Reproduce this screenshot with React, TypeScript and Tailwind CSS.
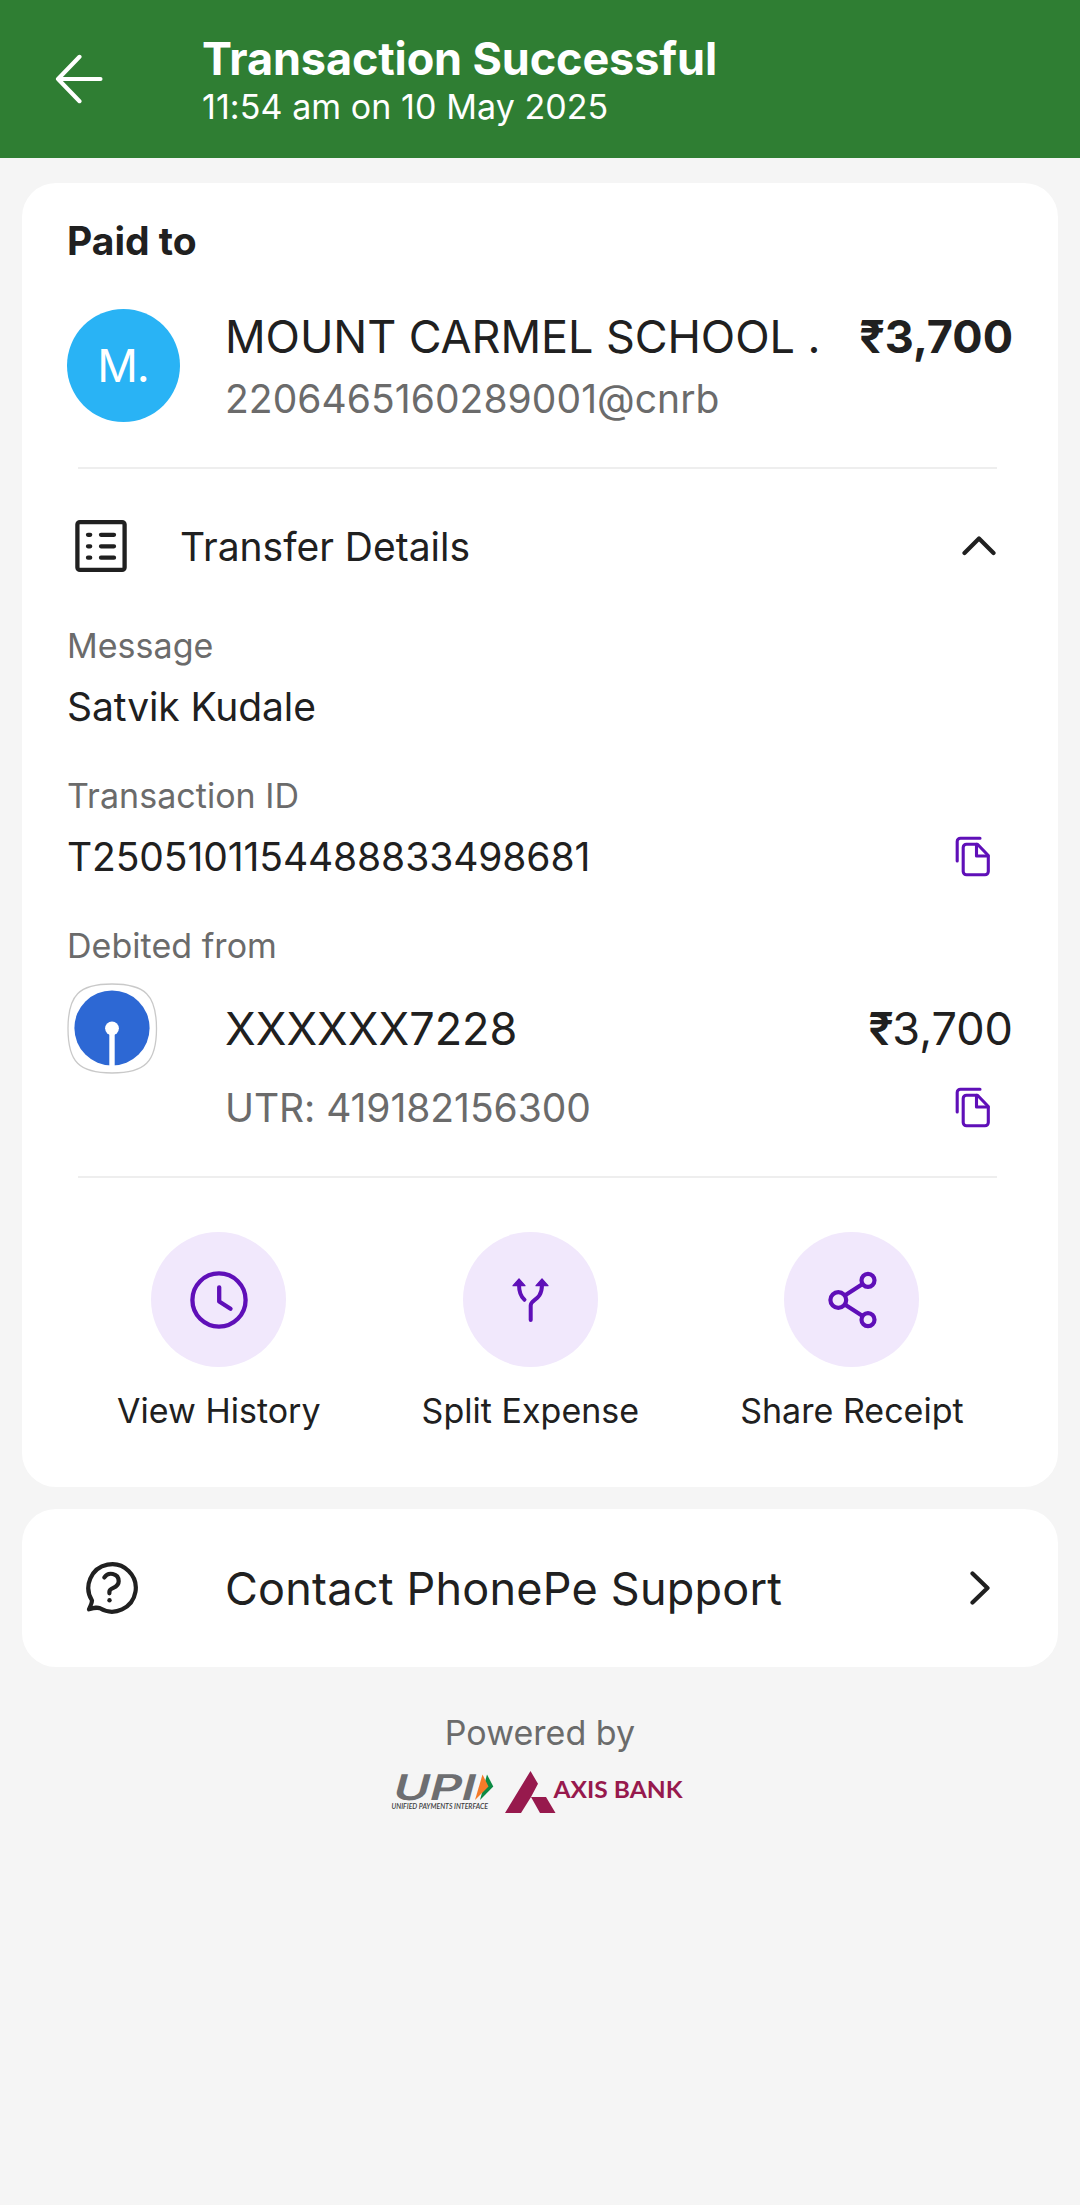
import type { ReactNode } from "react";

function BackIcon() {
  return (
    <svg width="48" height="50" viewBox="0 0 48 50" fill="none" stroke="#fff" strokeWidth="4.1" strokeLinecap="round" strokeLinejoin="round">
      <path d="M24.500 2.800 3 25l21.500 22.200M3 25H45.500" />
    </svg>
  );
}

function ListIcon() {
  return (
    <svg width="54" height="54" viewBox="0 0 54 54" fill="none" stroke="#202020" strokeWidth="4.300" className="mb-0.5">
      <rect x="3.400" y="3.100" width="47.200" height="47.800" rx="2.500" />
      <path strokeLinecap="round" d="M14 15.800h2.200M14 27.300h2.200M14 38.700h2.200M27 15.800h13M27 27.300h13M27 38.700h13" />
    </svg>
  );
}

function ChevronUp() {
  return (
    <svg width="34" height="22" viewBox="0 0 34 22" fill="none" stroke="#202020" strokeWidth="4.200" strokeLinecap="round" strokeLinejoin="round" className="mb-0.5">
      <path d="M2.500 18 17 3.500l14.500 14.500" />
    </svg>
  );
}

function ChevronRight() {
  return (
    <svg width="22" height="34" viewBox="0 0 22 34" fill="none" stroke="#202020" strokeWidth="4.200" strokeLinecap="round" strokeLinejoin="round">
      <path d="M3.500 2.500 18.500 17l-15 14.500" />
    </svg>
  );
}

function CopyIcon() {
  return (
    <svg width="36" height="42" viewBox="0 0 36 42" fill="none" stroke="#5f0fb8" strokeWidth="3.100" strokeLinecap="round" strokeLinejoin="round">
      <path d="M2.200 25V5.500a3.300 3.300 0 0 1 3.300-3.300H25" />
      <path d="M11.500 8.200H22.500L33.300 19.500V35.500a3.300 3.300 0 0 1-3.300 3.300H11.500a3.300 3.300 0 0 1-3.300-3.300V11.500a3.300 3.300 0 0 1 3.300-3.300Z" />
      <path d="M21.500 8.200V20H33" />
    </svg>
  );
}

function ClockIcon() {
  return (
    <svg width="60" height="60" viewBox="0 0 60 60" fill="none" stroke="#5f0fb8" strokeWidth="4.300" strokeLinecap="round" strokeLinejoin="round">
      <circle cx="30" cy="30" r="26.600" />
      <path d="M30.200 17.300V31.500L41.500 38.800" />
    </svg>
  );
}

function SplitIcon() {
  return (
    <svg width="60" height="60" viewBox="0 0 60 60" fill="none" stroke="#5f0fb8" strokeWidth="4" strokeLinecap="round" strokeLinejoin="round">
      <path d="M30.700 50V35.500c0-6.500 11.300-4.500 11.300-21M24.500 29.800c-3-2.600-5.500-6.500-5.500-15.300" />
      <path d="M19 8.800l6 6.900h-12ZM42 8.800l6 6.900H36Z" fill="#5f0fb8" strokeWidth="1.200" />
    </svg>
  );
}

function ShareIcon() {
  return (
    <svg width="60" height="60" viewBox="0 0 60 60" fill="none" stroke="#5f0fb8" strokeWidth="4.200">
      <circle cx="16.300" cy="30" r="7.900" />
      <circle cx="46" cy="10.300" r="6.500" />
      <circle cx="46" cy="49.700" r="6.500" />
      <path d="M22.800 25.600 40.600 13.900M22.800 34.400l17.800 11.700" />
    </svg>
  );
}

function SupportIcon() {
  return (
    <svg width="54" height="54" viewBox="0 0 54 54" fill="none" stroke="#202020" strokeWidth="4.200" strokeLinecap="round" strokeLinejoin="round" className="mb-0.5">
      <path d="M7 40.500A23.700 23.700 0 1 1 15 48.300C12 47 10 47.500 4 49.300 5.500 45.500 7 43.500 7 40.500Z" />
      <path d="M19.300 17.500c3.500-6 14.400-4.600 14.400 3.800 0 7.700-9.300 5.500-9.300 10.500v1.500" />
      <circle cx="24.500" cy="40.300" r="2.200" fill="#202020" stroke="none" />
    </svg>
  );
}

function BankLogo() {
  return (
    <svg width="91" height="91" viewBox="0 0 91 91" className="shrink-0">
      <path d="M45 1C78 1 89.500 12 89.500 45.500S78 90 45 90 1 79 1 45.500 12 1 45 1Z" fill="#fff" stroke="#c9c9c9" strokeWidth="1.300" />
      <circle cx="45" cy="45" r="37.600" fill="#2d68d4" />
      <circle cx="45" cy="45.300" r="6.900" fill="#fff" />
      <path d="M42.300 46h5.400v38h-5.400Z" fill="#fff" />
    </svg>
  );
}

function PartnerLogos() {
  return (
    <svg width="300" height="56" viewBox="390 1765 300 56" className="shrink-0">
      <g transform="translate(391 1800) skewX(-15)">
        <text x="0" y="0" fontFamily="Inter" fontWeight="600" fontSize="35.500" fill="#6d6e71" textLength="82" lengthAdjust="spacingAndGlyphs">UPI</text>
      </g>
      <path d="M487 1774.500 493.300 1786.500 480 1800Z" fill="#0b8a43" />
      <path d="M482.500 1774.500 488.500 1786.500 475 1800Z" fill="#f47b29" />
      <text x="391.500" y="1809" fontFamily="Lato" fontStyle="italic" fontWeight="600" fontSize="7.400" fill="#3c3c3e" textLength="96.500" lengthAdjust="spacingAndGlyphs">UNIFIED PAYMENTS INTERFACE</text>
      <path d="M530.500 1771 538 1783.800 531 1797h15l9.500 16H540L531 1797 521 1813H505Z" fill="#97194d" />
      <text x="553.500" y="1797.800" fontFamily="Lato" fontWeight="700" fontSize="22.500" fill="#97194d" textLength="129" lengthAdjust="spacingAndGlyphs">AXIS BANK</text>
    </svg>
  );
}

function Divider({ className }: { className: string }) {
  return <div className={`ml-[11px] mr-4 h-0.5 bg-[#eeeeee] ${className}`} />;
}

function Action({ icon, label }: { icon: ReactNode; label: string }) {
  return (
    <div className="flex flex-col items-center">
      <div className="flex size-[135px] items-center justify-center rounded-full bg-[#f1e8fc]">{icon}</div>
      <span className="mt-[22px] text-[34px] leading-[43px] tracking-[0.02px]">{label}</span>
    </div>
  );
}

function FieldLabel({ children }: { children: string }) {
  return <p className="text-[34px] leading-[43px] tracking-[0.04px] text-[#6b6b6b]">{children}</p>;
}

export default function App() {
  return (
    <div className="min-h-[2205px] w-[1080px] overflow-hidden bg-[#f5f5f5] font-['Inter',sans-serif] text-[#202020]">
      <header className="flex h-[158px] items-center bg-[#2f7e33] pl-[55px] text-white">
        <BackIcon />
        <div className="mt-0.5 ml-[99px] flex flex-col">
          <h1 className="text-[45px] leading-[54px] font-bold tracking-[-0.13px]">Transaction Successful</h1>
          <p className="text-[34px] leading-[42px] tracking-[0.08px]">11:54 am on 10 May 2025</p>
        </div>
      </header>

      <main className="mx-[22px] mt-[25px] flex flex-col rounded-[34px] bg-white px-[45px] pt-[30px] pb-[55px]">
        <h2 className="text-[39px] leading-[55px] font-bold">Paid to</h2>
        <div className="mt-[41px] flex">
          <div className="flex size-[113px] shrink-0 items-center justify-center rounded-full bg-[#29b3f5] pr-px text-[45px] tracking-[-1px] text-white">M.</div>
          <div className="ml-[45px] flex grow flex-col whitespace-nowrap">
            <div className="flex justify-between text-[45px] leading-[55px]">
              <span className="tracking-[-0.08px]">MOUNT CARMEL SCHOOL .</span>
              <span className="font-bold">₹3,700</span>
            </div>
            <span className="mt-2.5 text-[39px] leading-[49px] tracking-[0.05px] text-[#6b6b6b]">2206465160289001@cnrb</span>
          </div>
        </div>
        <Divider className="mt-[44px]" />

        <div className="flex h-[155px] items-center pr-[17px] pl-[7px]">
          <ListIcon />
          <span className="mt-0.5 ml-[52px] grow text-[39px]">Transfer Details</span>
          <ChevronUp />
        </div>

        <FieldLabel>Message</FieldLabel>
        <p className="text-[39px] leading-[79px] tracking-[-0.1px]">Satvik Kudale</p>
        <div className="mt-7">
          <FieldLabel>Transaction ID</FieldLabel>
        </div>
        <div className="flex items-center justify-between pr-[22px] text-[39px] leading-[79px] tracking-[-0.1px]">
          <span>T2505101154488833498681</span>
          <CopyIcon />
        </div>
        <div className="mt-7">
          <FieldLabel>Debited from</FieldLabel>
        </div>
        <div className="mt-4 flex h-[91px] items-center text-[45px]">
          <BankLogo />
          <span className="ml-[67px] grow">XXXXXX7228</span>
          <span><span className="font-semibold tracking-[-1.500px]">₹</span>3,700</span>
        </div>
        <div className="flex items-center justify-between pr-[22px] pl-[158px] text-[39px] leading-[67px] tracking-[-0.06px] text-[#6b6b6b]">
          <span>UTR: 419182156300</span>
          <CopyIcon />
        </div>
        <Divider className="mt-[35px]" />

        <div className="mt-[54px] flex gap-[101px] pl-[50px] whitespace-nowrap">
          <Action icon={<ClockIcon />} label="View History" />
          <Action icon={<SplitIcon />} label="Split Expense" />
          <Action icon={<ShareIcon />} label="Share Receipt" />
        </div>
      </main>

      <section className="mx-[22px] mt-[22px] flex h-[158px] items-center rounded-[34px] bg-white pr-[67px] pl-[63px] text-[45px]">
        <SupportIcon />
        <span className="mt-px ml-[86px] grow tracking-[0.22px]">Contact PhonePe Support</span>
        <ChevronRight />
      </section>

      <footer className="mt-[44px] flex flex-col items-center">
        <FieldLabel>Powered by</FieldLabel>
        <div className="mt-[11px]"><PartnerLogos /></div>
      </footer>
    </div>
  );
}
